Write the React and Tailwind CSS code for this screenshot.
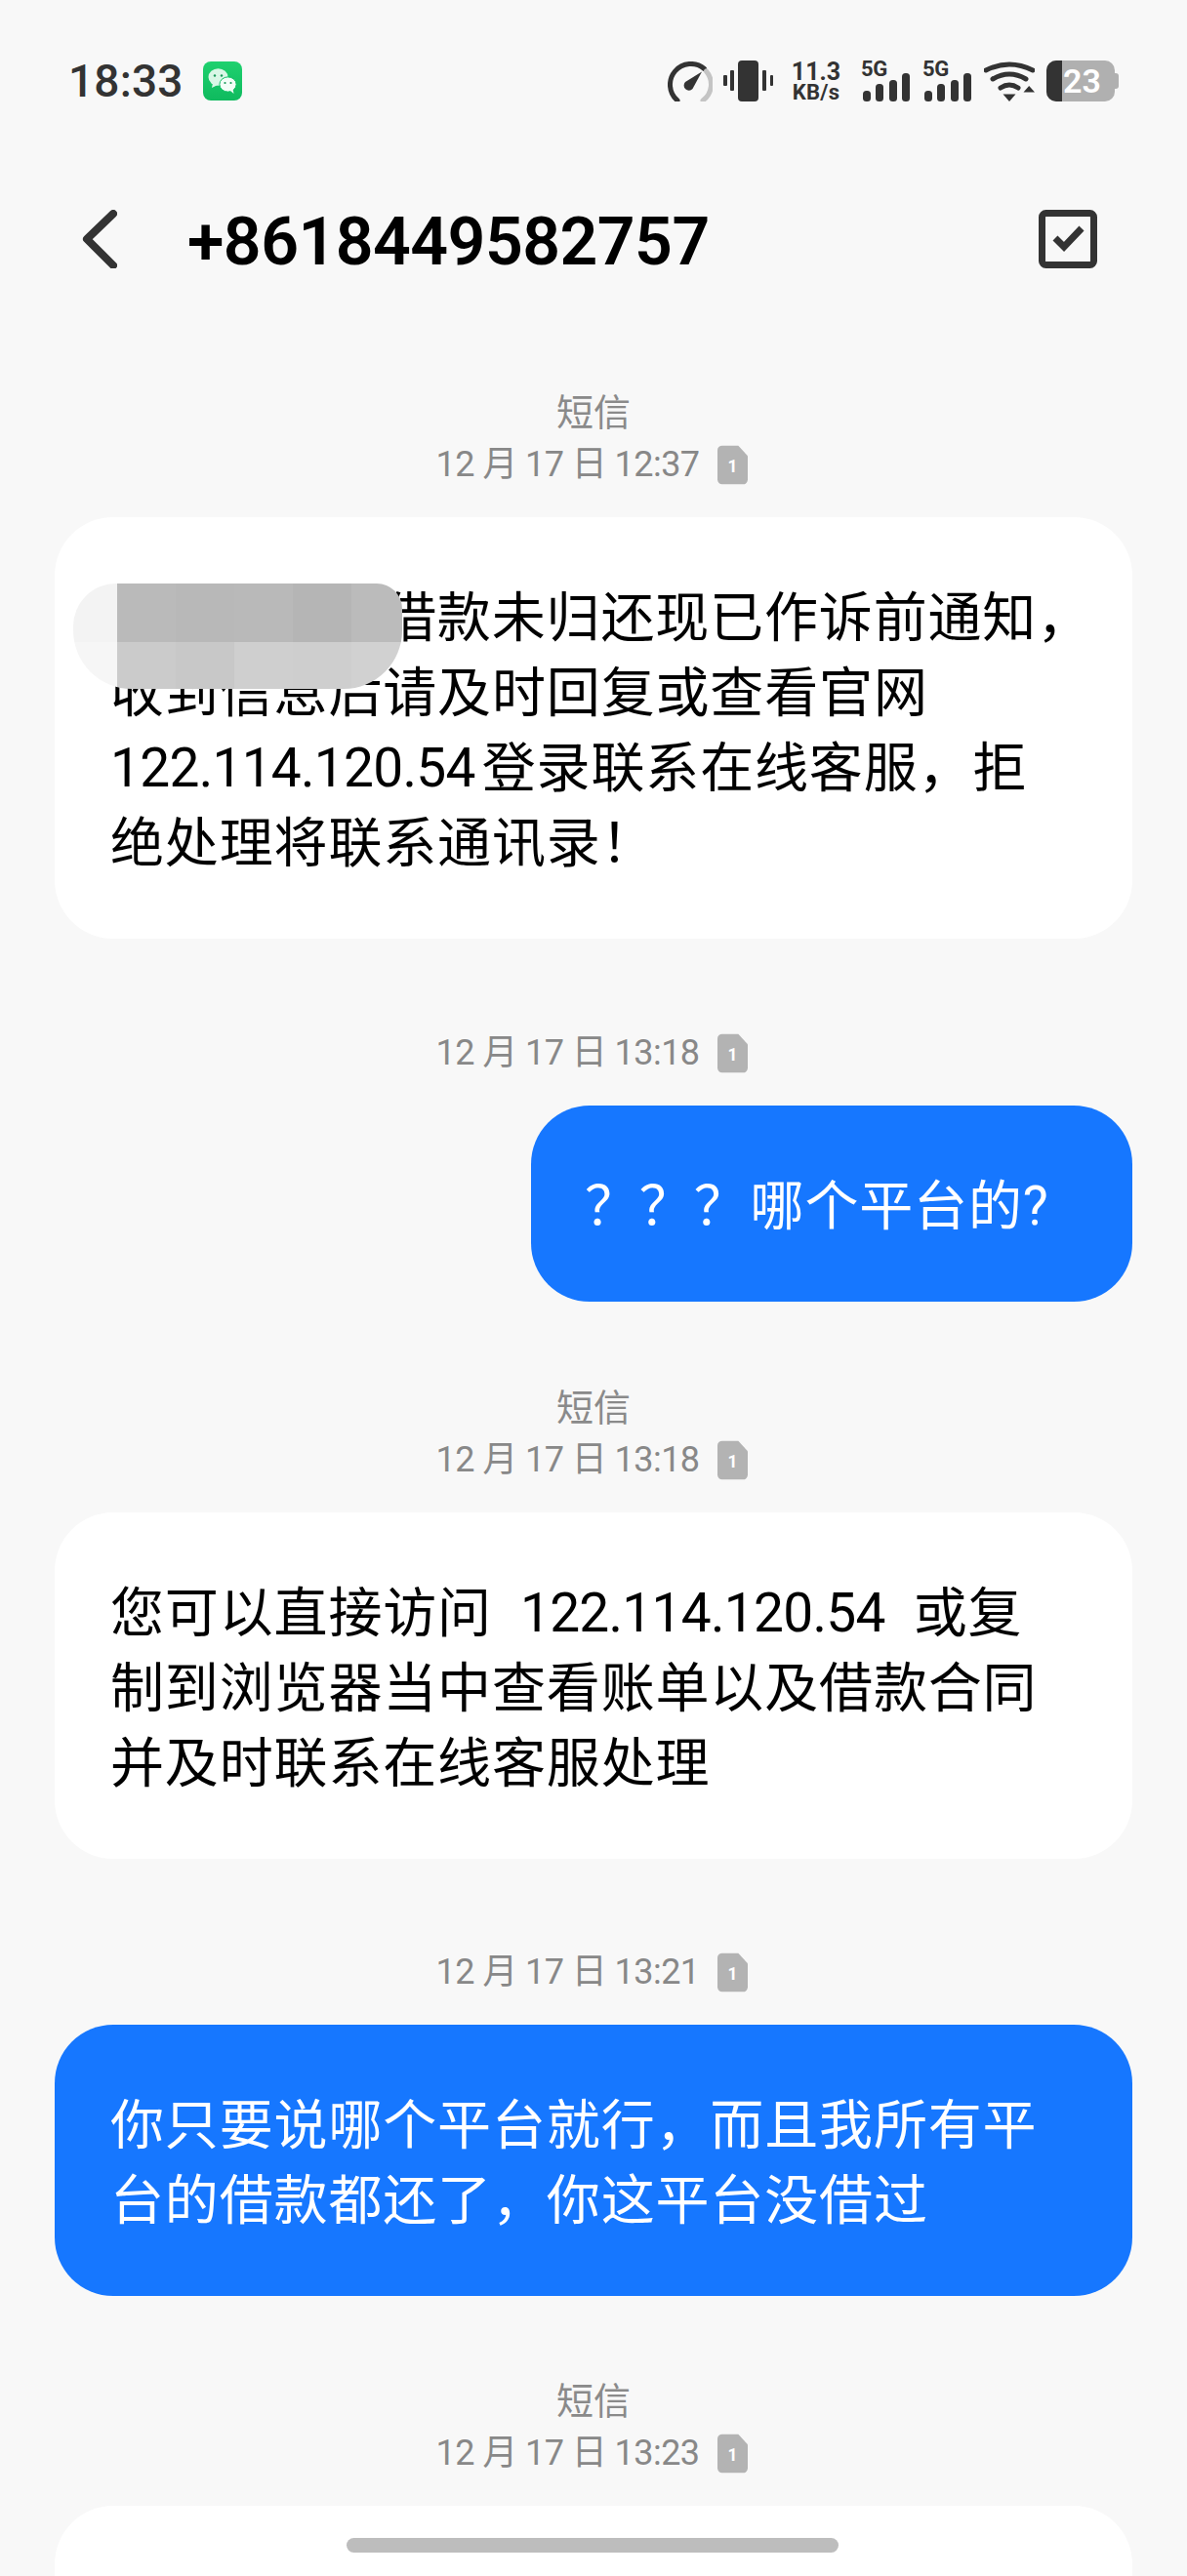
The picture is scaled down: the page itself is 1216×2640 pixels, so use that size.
import React from "react";

function SimIcon() {
  return (
    <svg width="31" height="41" viewBox="0 0 32 41" className="shrink-0">
      <path d="M5 0H22L32 11V36a5 5 0 0 1-5 5H5a5 5 0 0 1-5-5V5a5 5 0 0 1 5-5Z" fill="#b3b3b3" />
      <text x="16" y="28" textAnchor="middle" fontSize="18" fontWeight="700" fill="#fff" fontFamily="Roboto, sans-serif">1</text>
    </svg>
  );
}

function Stamp({ sms, time, className = "" }) {
  return (
    <div className={`flex flex-col items-center ${className}`}>
      {sms && <div className="h-10 mb-[13px] text-[38px] leading-10 text-[#8a8a8a]">短信</div>}
      <div className="flex items-center justify-center h-10 gap-[18px] mr-[4px]">
        <span className="text-[36px] leading-10 text-[#888888] tracking-[-0.55px]">{time}</span>
        <SimIcon />
      </div>
    </div>
  );
}

function Bubble({ blue, children, className = "" }) {
  return (
    <div
      className={`mt-[34px] rounded-[60px] pt-[65px] pb-[59px] text-[55px] leading-[77px] tracking-[0.85px] whitespace-nowrap ${
        blue ? "bg-[#1677ff] text-white" : "bg-white text-black"
      } ${className}`}
    >
      {children}
    </div>
  );
}

function Signal() {
  return (
    <div className="relative w-[50px] h-[41px]">
      <span className="absolute left-0 top-[-5px] text-[22px] leading-[26px] font-bold text-[#333] tracking-[-0.4px]">5G</span>
      <svg width="50" height="41" viewBox="0 0 50 41" fill="#333">
        <rect x="2" y="30" width="8" height="11" rx="3.5" />
        <rect x="15" y="23" width="8" height="18" rx="3.5" />
        <rect x="29" y="19" width="8" height="22" rx="3.5" />
        <rect x="42" y="12" width="8" height="29" rx="3.5" />
      </svg>
    </div>
  );
}

function StatusBar() {
  return (
    <div className="flex items-center h-[42px] mt-[62px] pl-[70px] pr-[70px]">
      <span className="text-[46px] leading-[42px] font-medium text-[#333] tracking-[0.2px]">18:33</span>
      <svg width="40" height="40" viewBox="0 0 40 40" className="ml-[20px]">
        <defs>
          <linearGradient id="wx" x1="0" y1="0" x2="0" y2="1">
            <stop offset="0" stopColor="#1fd16f" />
            <stop offset="1" stopColor="#0fba5e" />
          </linearGradient>
        </defs>
        <rect width="40" height="40" rx="8" fill="url(#wx)" />
        <ellipse cx="15.5" cy="16" rx="10" ry="8.8" fill="#d9f7e6" />
        <path d="M10 22l-1 5 6-3z" fill="#d9f7e6" />
        <circle cx="12" cy="14.5" r="1.2" fill="#1a9a5a" />
        <circle cx="19" cy="14.5" r="1.2" fill="#1a9a5a" />
        <ellipse cx="25.5" cy="23.5" rx="8.6" ry="7.6" fill="#f2fdf7" stroke="#14c167" strokeWidth="1" />
        <path d="M28 30l3.5 3-1-5z" fill="#f2fdf7" />
        <circle cx="22.5" cy="22" r="1.1" fill="#1a9a5a" />
        <circle cx="28.5" cy="22" r="1.1" fill="#1a9a5a" />
      </svg>

      <div className="ml-auto flex items-center">
        <svg width="46" height="41" viewBox="0 0 46 41" fill="none">
          <path d="M10 40A20.5 20.5 0 0 1 37.5 7.5" stroke="#333" strokeWidth="5" strokeLinecap="round" />
          <path d="M39.5 10A20.5 20.5 0 0 1 36 40" stroke="#c4c4c4" strokeWidth="5" strokeLinecap="round" />
          <path d="M18 21L35 10.5 25.5 28a4.6 4.6 0 1 1-7.5-7Z" fill="#333" />
        </svg>
        <svg width="51" height="42" viewBox="0 0 51 42" fill="#333" className="ml-[11px]">
          <rect x="0" y="15" width="4" height="11" rx="1" />
          <rect x="7" y="10" width="4" height="21" rx="1" />
          <rect x="15" y="0" width="21" height="42" rx="4" />
          <rect x="40" y="10" width="4" height="21" rx="1" />
          <rect x="48" y="15" width="3" height="11" rx="1" />
        </svg>
        <div className="ml-[19px] w-[50px] flex flex-col items-center font-bold text-[#333]">
          <span className="text-[25px] leading-[22px]">11.3</span>
          <span className="text-[22px] leading-[19px] tracking-[0.2px]">KB/s</span>
        </div>
        <div className="ml-[21px]"><Signal /></div>
        <div className="ml-[13px]"><Signal /></div>
        <svg width="52" height="41" viewBox="0 0 52 41" fill="none" className="ml-[13px]">
          <path d="M2 9Q26-3 50 9" stroke="#333" strokeWidth="5" strokeLinecap="round" />
          <path d="M9 18Q26 8 43 18" stroke="#333" strokeWidth="5" strokeLinecap="round" />
          <path d="M17 27Q26 21 35 27" stroke="#333" strokeWidth="5" strokeLinecap="round" />
          <path d="M19.5 33.5H32.5L26 41Z" fill="#333" />
          <path d="M40.5 31.5H52L46.2 25Z" fill="#333" />
        </svg>
        <div className="ml-[12px] flex items-center">
          <div className="relative flex w-[70px] h-[42px] rounded-[10px] overflow-hidden bg-[#b0b0b0]">
            <div className="w-[16px] bg-[#333]" />
            <span className="ml-[1px] text-[34px] leading-[42px] font-semibold text-white">23</span>
          </div>
          <div className="w-[4px] h-[16px] rounded-r-[3px] bg-[#b0b0b0]" />
        </div>
      </div>
    </div>
  );
}

function Mosaic() {
  const top = ["#bababa", "#b8b8b8", "#b9b9b9", "#b5b5b5", "#bbbbbb"];
  const bottom = ["#cbcbcb", "#c8c8c8", "#cfcfcf", "#cecece", "#d1d1d1"];
  return (
    <div className="absolute left-[19px] top-[102px] w-[337px] h-[108px] rounded-tl-[44px] rounded-tr-[26px] rounded-bl-[60px] rounded-br-[60px] overflow-hidden grid grid-cols-[45px_60px_60px_60px_60px_52px] grid-rows-[60px_48px]">
      <div className="bg-[#f3f3f3]" />
      {top.map((c, i) => (
        <div key={i} style={{ backgroundColor: c }} />
      ))}
      <div className="bg-[#f6f6f6]" />
      {bottom.map((c, i) => (
        <div key={i} style={{ backgroundColor: c }} />
      ))}
    </div>
  );
}

export default function App() {
  return (
    <div className="relative w-[1216px] h-[2640px] overflow-hidden bg-[#f8f8f8] font-['Roboto','Noto_Sans_CJK_SC',sans-serif]">
      <StatusBar />

      <div className="flex items-center justify-between h-[60px] mt-[111px] pl-[84px] pr-[92px]">
        <div className="flex items-center">
          <svg width="36" height="60" viewBox="0 0 36 60" fill="none">
            <path d="M32 4L5 30L32 57" stroke="#333" strokeWidth="8" strokeLinecap="round" strokeLinejoin="round" />
          </svg>
          <span className="ml-[72px] mt-[6px] text-[68px] leading-[60px] font-semibold text-black tracking-[-0.55px]">+8618449582757</span>
        </div>
        <svg width="60" height="60" viewBox="0 0 60 60" fill="none">
          <rect x="3.5" y="3.5" width="53" height="53" rx="4" stroke="#333" strokeWidth="7" />
          <path d="M17 29L26 38L44 19" stroke="#333" strokeWidth="7" strokeLinejoin="miter" />
        </svg>
      </div>

      <div className="flex flex-col px-[56px] mt-[128px]">
        <Stamp sms time="12 月 17 日 12:37" />
        <div className="relative">
          <Bubble className="px-[57px]">
            <div>
              <span className="inline-block w-[279px]" />借款未归还现已作诉前通知，
            </div>
            <div>收到信息后请及时回复或查看官网</div>
            <div><span className="tracking-[-0.7px] mr-[7px]">122.114.120.54</span>登录联系在线客服，拒</div>
            <div>绝处理将联系通讯录！</div>
          </Bubble>
          <Mosaic />
        </div>

        <Stamp time="12 月 17 日 13:18" className="mt-[97px]" />
        <Bubble blue className="self-end w-[616px] pl-[55px]">？？？<span className="ml-[2px]">哪个平台的?</span></Bubble>

        <Stamp sms time="12 月 17 日 13:18" className="mt-[89px]" />
        <Bubble className="px-[57px]">
          <div>您可以直接访问&nbsp; <span className="tracking-[-0.7px]">122.114.120.54</span>&nbsp; 或复</div>
          <div>制到浏览器当中查看账单以及借款合同</div>
          <div>并及时联系在线客服处理</div>
        </Bubble>

        <Stamp time="12 月 17 日 13:21" className="mt-[96px]" />
        <Bubble blue className="px-[57px]">
          <div>你只要说哪个平台就行，而且我所有平</div>
          <div>台的借款都还了，你这平台没借过</div>
        </Bubble>

        <Stamp sms time="12 月 17 日 13:23" className="mt-[88px]" />
        <Bubble className="h-[200px]" />
      </div>

      <div className="absolute left-[355px] top-[2601px] w-[504px] h-[15px] rounded-full bg-[#bdbdbd]" />
    </div>
  );
}
